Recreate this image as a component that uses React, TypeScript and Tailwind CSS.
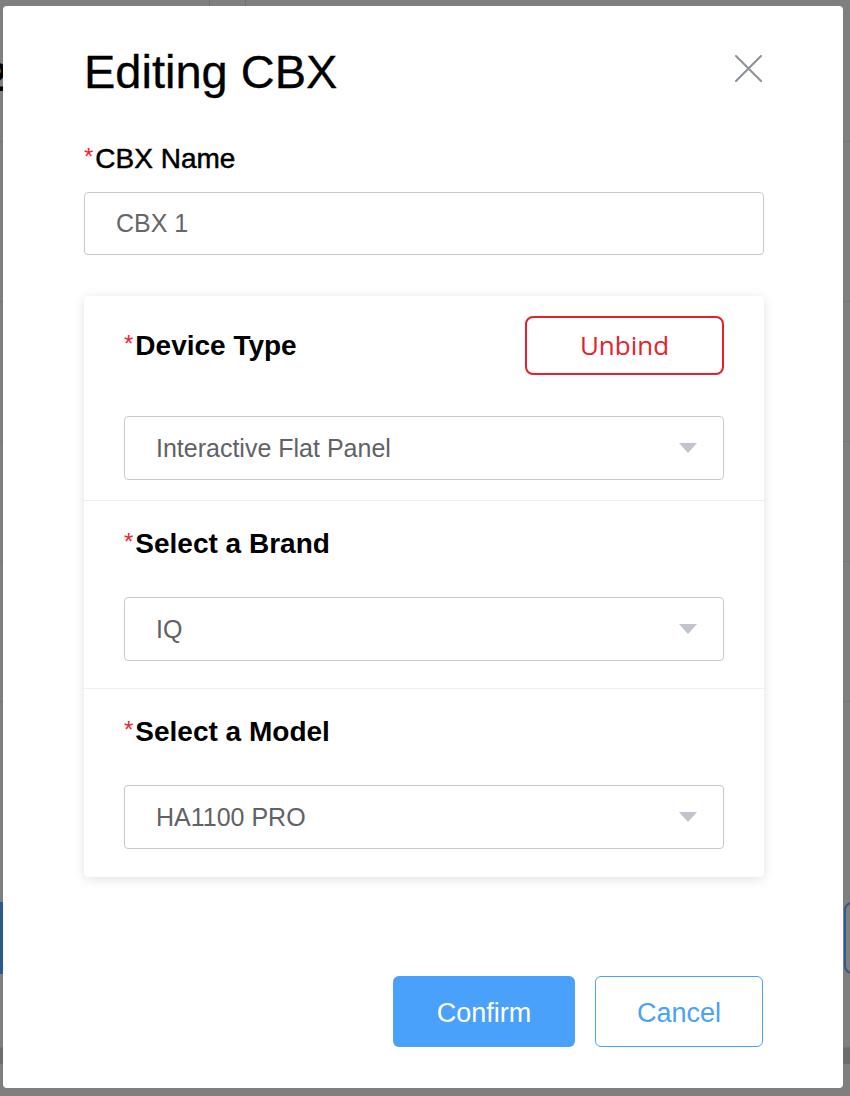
import React from "react";

const font = { fontFamily: '"Liberation Sans", Arial, sans-serif' };

function Caret() {
  return (
    <svg width="18" height="10" viewBox="0 0 18 10" className="shrink-0">
      <path d="M0 0 L18 0 L9 10 Z" fill="#c0c4cc" />
    </svg>
  );
}

function Select({ value }: { value: string }) {
  return (
    <div className="flex h-[64px] items-center justify-between rounded-[4px] border border-[#c8c9cc] bg-white pl-[31px] pr-[26px]">
      <span className="text-[25px] leading-none text-[#606266]">{value}</span>
      <Caret />
    </div>
  );
}

function Label({ text }: { text: string }) {
  return (
    <div className="flex items-start text-[28px] font-bold leading-[28px] text-black">
      <span className="mr-[2px] text-[24px] font-normal leading-[24px] text-[#f5222d]">*</span>
      <span>{text}</span>
    </div>
  );
}

export default function App() {
  return (
    <div className="relative h-[1096px] w-[850px] overflow-hidden bg-[#7f7f7f]" style={font}>
      {/* background page (dimmed) */}
      <div className="flex h-full flex-col">
        <div className="flex h-[12px]">
          <div className="w-[209px]" />
          <div className="w-[36px] border-l border-[#6f6f6f]" />
          <div className="border-l border-[#6f6f6f]" />
        </div>
        <div className="flex h-[130px] items-center border-b border-[#747474]">
          <span className="ml-[-14px] text-[40px] font-bold text-[#050505]">2</span>
        </div>
        <div className="h-[160px] border-b border-[#747474]" />
        <div className="h-[140px] border-b border-[#747474]" />
        <div className="h-[120px] border-b border-[#747474]" />
        <div className="h-[140px] border-b border-[#747474]" />
        <div className="h-[200px]" />
        <div className="flex h-[72px] items-stretch justify-between">
          <div className="w-[6px] bg-[#2a5a8e]" />
          <div className="mr-[-30px] w-[36px] rounded-[8px] border-2 border-[#2c5a8a]" />
        </div>
        <div className="h-[74px] border-b border-[#747474]" />
        <div className="h-[16px] bg-[#6c6c6c]" />
      </div>

      {/* modal */}
      <div className="absolute left-[3px] top-[6px] flex h-[1082px] w-[840px] flex-col rounded-[4px] bg-white pl-[81px] pr-[79px] pt-[42px]">
        <div className="flex h-[46px] items-center justify-between">
          <h1 className="text-[47px] leading-none text-black" style={{ WebkitTextStroke: "0.3px black" }}>Editing CBX</h1>
          <svg width="27" height="27" viewBox="0 0 27 27" className="mb-[6px] mr-[2px]">
            <path d="M1 1 L26 26 M26 1 L1 26" stroke="#8b9099" strokeWidth="2" strokeLinecap="round" />
          </svg>
        </div>

        <div className="mt-[51px] flex items-start text-[28px] leading-[28px] text-black">
          <span className="mr-[2px] text-[24px] leading-[24px] text-[#f5222d]">*</span>
          <span style={{ WebkitTextStroke: "0.5px black" }}>CBX Name</span>
        </div>
        <div className="mt-[19px] flex h-[63px] items-center rounded-[4px] border border-[#c9c9c9] pl-[31px] text-[25px] text-[#666666]">
          CBX 1
        </div>

        <div className="mt-[41px] flex flex-col rounded-[4px] bg-white shadow-[0_2px_12px_0_rgba(0,0,0,0.12)]">
          <div className="border-b border-[#ebeef5] px-[40px] pb-[20px] pt-[20px]">
            <div className="flex h-[59px] items-center justify-between">
              <Label text="Device Type" />
              <button
                className="flex h-[59px] w-[199px] items-center justify-center rounded-[8px] border-2 border-[#e8202a] text-[26px] text-[#e8202a]"
                style={{ fontFamily: '"Open Sans", sans-serif' }}
              >
                Unbind
              </button>
            </div>
            <div className="mt-[41px]">
              <Select value="Interactive Flat Panel" />
            </div>
          </div>
          <div className="border-b border-[#ebeef5] px-[40px] pb-[27px] pt-[29px]">
            <Label text="Select a Brand" />
            <div className="mt-[39px]">
              <Select value="IQ" />
            </div>
          </div>
          <div className="px-[40px] pb-[28px] pt-[29px]">
            <Label text="Select a Model" />
            <div className="mt-[39px]">
              <Select value="HA1100 PRO" />
            </div>
          </div>
        </div>

        <div className="mt-[99px] flex justify-end gap-[20px] pr-[1px]">
          <button className="flex h-[71px] w-[182px] items-center justify-center rounded-[6px] bg-[#4aa1fc] pt-[3px] text-[27px] text-white">
            Confirm
          </button>
          <button className="flex h-[71px] w-[168px] items-center justify-center rounded-[6px] border border-[#4aa1fc] bg-white pt-[3px] text-[27px] text-[#4aa1fc]">
            Cancel
          </button>
        </div>
      </div>
    </div>
  );
}
